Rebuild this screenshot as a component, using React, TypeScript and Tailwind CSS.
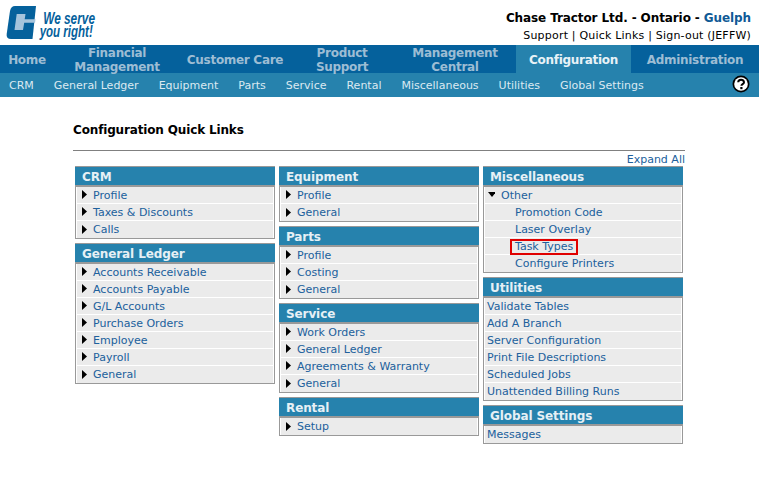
const navItems = [
  { label: ['Home'], width: 'w-[54px]' },
  { label: ['Financial', 'Management'], width: 'w-[126px]' },
  { label: ['Customer Care'], width: 'w-[110px]' },
  { label: ['Product', 'Support'], width: 'w-[104px]' },
  { label: ['Management', 'Central'], width: 'w-[122px]' },
  { label: ['Configuration'], width: 'w-[115px]', active: true },
  { label: ['Administration'], width: 'w-[128px]' },
];

const subNav = ['CRM', 'General Ledger', 'Equipment', 'Parts', 'Service', 'Rental', 'Miscellaneous', 'Utilities', 'Global Settings'];

function Arrow({ down }: { down?: boolean }) {
  return (
    <svg width="7" height="10" viewBox="0 0 7 10" className="shrink-0 -mt-[2px]">
      {down ? <path d="M0 2h8L4 7z" fill="#000" /> : <path d="M1 0l5 4.5L1 9z" fill="#000" />}
    </svg>
  );
}

function Row({ label, arrow }: { label: string; arrow?: boolean }) {
  return (
    <div className={`h-[17px] mx-px pt-[2px] flex items-center gap-[5px] bg-[#ebebeb] border-b border-white last:border-b-0 text-[#20609c] ${arrow ? 'pl-[4px]' : 'pl-[2px]'}`}>
      {arrow && <Arrow />}
      <span>{label}</span>
    </div>
  );
}

function Card({ title, children }: { title: string; children: React.ReactNode }) {
  return (
    <div className="border border-[#999] border-t-2 bg-white">
      <div className="h-[18px] -mx-px -mt-px bg-[#2682ad] border-b-2 border-[#999] box-content pl-[7px] text-[12px] leading-[20px] tracking-[-0.1px] font-bold text-[#e6f0f5]">{title}</div>
      {children}
    </div>
  );
}

function LinkCard({ title, links, arrow = true }: { title: string; links: string[]; arrow?: boolean }) {
  return (
    <Card title={title}>
      {links.map((l) => (
        <Row key={l} label={l} arrow={arrow} />
      ))}
    </Card>
  );
}

function SubRow({ label, boxed }: { label: string; boxed?: boolean }) {
  return (
    <div className="h-[17px] mx-px pt-[2px] flex items-center pl-[30px] bg-[#ebebeb] border-b border-white last:border-b-0 text-[#20609c]">
      <span className={boxed ? 'border-2 border-[#e00000] px-[3px] -ml-[5px] leading-[12px]' : ''}>{label}</span>
    </div>
  );
}

export default function App() {
  return (
    <div className="w-[759px] h-[485px] bg-white overflow-hidden text-[11px] font-['DejaVu_Sans',Verdana,sans-serif]">
      {/* Header */}
      <div className="h-[45px] flex justify-between">
        <div className="pl-[6px] pt-[6px] flex items-start">
          <svg width="30" height="33" viewBox="0 0 30 33">
            <path d="M9 0H30L26.5 33H5Q0 33 .7 28L4 5Q5 0 9 0z" fill="#05619c" />
            <path d="M10.7 8H19.5L18.7 13.3H29.5L29 16.7H18.2L17 24H8.5z" fill="#a5c4dc" />
          </svg>
          <div className="ml-[2px] pt-[6px] w-[57px] flex flex-col items-end font-['Liberation_Sans',sans-serif] italic font-bold text-[16px] leading-[13px] text-[#05619c] whitespace-nowrap">
            <div className="scale-x-[0.74] origin-right">We serve</div>
            <div className="scale-x-[0.72] origin-right mr-[2px]">you right!</div>
          </div>
        </div>
        <div className="pr-[8px] pt-[10px] text-right">
          <div className="text-[12px] leading-[17px] font-bold text-black tracking-[-0.1px]">
            Chase Tractor Ltd. - Ontario - <span className="text-[#0f5a96]">Guelph</span>
          </div>
          <div className="text-black leading-[17px] tracking-[0.2px]">Support | Quick Links | Sign-out (JEFFW)</div>
        </div>
      </div>

      {/* Main nav */}
      <div className="h-[28px] flex bg-[#05619c] font-bold text-[12px] tracking-[-0.3px] leading-[14px] text-[#9dbdd4]">
        {navItems.map((n) => (
          <div key={n.label[0]} className={`${n.width} pt-[2px] flex flex-col items-center justify-center ${n.active ? 'bg-[#2682ad] text-[#e8f2f7]' : ''}`}>
            {n.label.map((l) => (
              <span key={l}>{l}</span>
            ))}
          </div>
        ))}
      </div>

      {/* Sub nav */}
      <div className="h-[24px] pt-[2px] flex items-center bg-[#2682ad] pl-[9px] pr-[9px] gap-[20px] text-[#dbe9f1]">
        {subNav.map((s) => (
          <span key={s}>{s}</span>
        ))}
        <svg className="ml-auto -mt-[4px]" width="18" height="18" viewBox="0 0 18 18">
          <circle cx="9" cy="9" r="8.5" fill="#000" />
          <circle cx="9" cy="9" r="6.8" fill="#fff" />
          <path d="M6.2 7.2c0-3.4 5.8-3.4 5.8 0 0 2-2.6 1.9-2.6 3.6" fill="none" stroke="#000" strokeWidth="2" />
          <rect x="8.3" y="12" width="2.2" height="2.2" fill="#000" />
        </svg>
      </div>

      {/* Content */}
      <div className="ml-[73px] w-[612px] pt-[24px]">
        <div className="h-[29px] text-[12px] font-bold text-black leading-[19px] tracking-[-0.15px]">Configuration Quick Links</div>
        <div className="border-t border-[#808080] pt-[2px] h-[16px] text-right text-[#20609c] leading-[13px]">Expand All</div>
        <div className="ml-[2px] flex gap-[4px] items-start">
          <div className="w-[200px] flex flex-col gap-[4px]">
            <LinkCard title="CRM" links={['Profile', 'Taxes & Discounts', 'Calls']} />
            <LinkCard title="General Ledger" links={['Accounts Receivable', 'Accounts Payable', 'G/L Accounts', 'Purchase Orders', 'Employee', 'Payroll', 'General']} />
          </div>
          <div className="w-[200px] flex flex-col gap-[4px]">
            <LinkCard title="Equipment" links={['Profile', 'General']} />
            <LinkCard title="Parts" links={['Profile', 'Costing', 'General']} />
            <LinkCard title="Service" links={['Work Orders', 'General Ledger', 'Agreements & Warranty', 'General']} />
            <LinkCard title="Rental" links={['Setup']} />
          </div>
          <div className="w-[200px] flex flex-col gap-[4px]">
            <Card title="Miscellaneous">
              <div className="h-[17px] mx-px pt-[2px] flex items-center gap-[6px] pl-[3px] bg-[#ebebeb] border-b border-white text-[#20609c]">
                <Arrow down />
                <span>Other</span>
              </div>
              <SubRow label="Promotion Code" />
              <SubRow label="Laser Overlay" />
              <SubRow label="Task Types" boxed />
              <SubRow label="Configure Printers" />
            </Card>
            <LinkCard title="Utilities" arrow={false} links={['Validate Tables', 'Add A Branch', 'Server Configuration', 'Print File Descriptions', 'Scheduled Jobs', 'Unattended Billing Runs']} />
            <LinkCard title="Global Settings" arrow={false} links={['Messages']} />
          </div>
        </div>
      </div>
    </div>
  );
}
